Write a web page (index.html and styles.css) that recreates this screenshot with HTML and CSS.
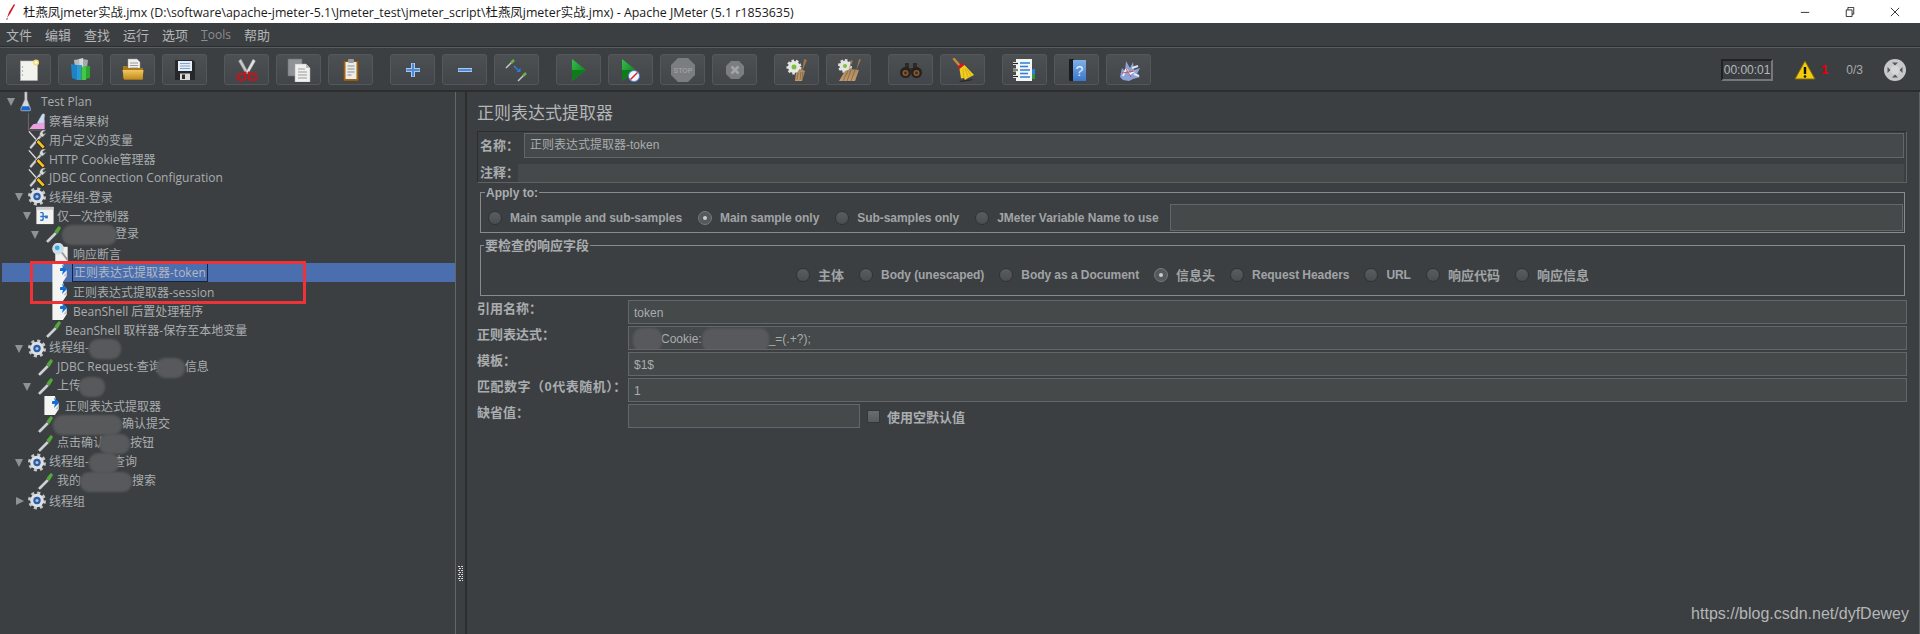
FILE: index.html
```html
<!DOCTYPE html>
<html lang="zh">
<head>
<meta charset="utf-8">
<title>JMeter</title>
<link rel="stylesheet" href="styles.css">
</head>
<body>
<svg class="defs" aria-hidden="true">
<defs>
<linearGradient id="gGreen" x1="0" y1="0" x2="1" y2="1"><stop offset="0" stop-color="#35c04a"/><stop offset="1" stop-color="#0a6f1a"/></linearGradient>
<linearGradient id="gFolder" x1="0" y1="0" x2="0" y2="1"><stop offset="0" stop-color="#f2c860"/><stop offset="1" stop-color="#c08a1c"/></linearGradient>
<linearGradient id="gBlue" x1="0" y1="0" x2="0" y2="1"><stop offset="0" stop-color="#7fb0e8"/><stop offset="1" stop-color="#3a78cc"/></linearGradient>
<linearGradient id="gBrush" x1="0" y1="0" x2="0" y2="1"><stop offset="0" stop-color="#a98a62"/><stop offset="1" stop-color="#c09a6c"/></linearGradient>

<symbol id="i-new" viewBox="0 0 24 24"><rect x="3.500" y="3" width="17" height="19.500" fill="#f2f2ee" stroke="#b8b8b4" stroke-width=".6"/><circle cx="5.500" cy="9" r=".7" fill="#999"/><circle cx="5.500" cy="13" r=".7" fill="#999"/><circle cx="5.500" cy="17" r=".7" fill="#999"/><circle cx="19" cy="4.500" r="3" fill="#f3dd7a"/><circle cx="19" cy="4.500" r="1.500" fill="#fff7c8"/></symbol>

<symbol id="i-tmpl" viewBox="0 0 24 24"><path d="M5 2l6-1 1 8-6 1z" fill="#b5babd"/><path d="M10 1l4-1 1 9-4 1z" fill="#d7dadc"/><path d="M14 1l5 1-1 8-4-1z" fill="#a4a9ac"/><path d="M2 6l6 1v15l-5-2z" fill="#1c83c9"/><path d="M8 7h5v15H8z" fill="#2a9ad6"/><path d="M12 9l9-1v12l-9 2z" fill="#2aa52e"/><path d="M13 9h4v13h-4z" fill="#48c648"/></symbol>

<symbol id="i-open" viewBox="0 0 24 24"><path d="M7 1h9l3 3v12H7z" fill="#efefec" stroke="#a0a0a0" stroke-width=".5"/><path d="M9 5h8M9 7.500h8M9 10h8" stroke="#9a9a9a"/><path d="M2 8h4l1.500 2H22v11.500H3.500L2 20z" fill="#a87a18"/><path d="M1.500 12h21l-1 9.500H3z" fill="url(#gFolder)"/></symbol>

<symbol id="i-save" viewBox="0 0 24 24"><path d="M2 2h18l2 2v18H2z" fill="#25282b"/><rect x="5" y="3" width="14" height="10" fill="#e7edf4"/><path d="M7 5.500h10M7 8h10M7 10.500h10" stroke="#7da6d4"/><rect x="7" y="15.500" width="10" height="6.500" fill="#d8d8d8"/><rect x="9" y="16.500" width="3" height="4.500" fill="#2b2b2b"/></symbol>

<symbol id="i-cut" viewBox="0 0 24 24"><path d="M6 1l7 13-2 2L3.500 3z" fill="#c6c9cb" stroke="#85888a" stroke-width=".5"/><path d="M18 1l-7 13 2 2 7.500-13z" fill="#e2e3e4" stroke="#85888a" stroke-width=".5"/><ellipse cx="6.500" cy="19" rx="4" ry="3.300" fill="none" stroke="#d01016" stroke-width="2"/><ellipse cx="17.500" cy="19" rx="4" ry="3.300" fill="none" stroke="#d01016" stroke-width="2"/><path d="M9 16l2-2M15 16l-2-2" stroke="#d01016" stroke-width="2"/></symbol>

<symbol id="i-copy" viewBox="0 0 24 24"><rect x="1" y="1" width="14" height="17" fill="#8f9396" stroke="#6d7073" stroke-width=".6"/><path d="M8 6h11l4 4v14H8z" fill="#f0f0ee" stroke="#b0b0ae" stroke-width=".5"/><path d="M19 6v4h4z" fill="#bbb"/><path d="M11 11h7M11 14h9M11 17h9M11 20h9" stroke="#9b9b9b"/></symbol>

<symbol id="i-paste" viewBox="0 0 24 24"><rect x="4.500" y="3" width="15" height="20" rx="1" fill="#9c6414" stroke="#6f470e" stroke-width=".6"/><rect x="6.500" y="4" width="11" height="17" fill="#ececea"/><rect x="9" y="1" width="6" height="4" rx="1" fill="#9a9c9e"/><path d="M8.500 8h7M8.500 11h7M8.500 14h7M8.500 17h4" stroke="#8f8f8f"/></symbol>

<symbol id="i-plus" viewBox="0 0 24 24"><path d="M12 5v14M5 12h14" stroke="#a9c8ee" stroke-width="4"/><path d="M12 5.500v13M5.500 12h13" stroke="#4e8ad6" stroke-width="2"/></symbol>
<symbol id="i-minus" viewBox="0 0 24 24"><path d="M5 12h14" stroke="#a9c8ee" stroke-width="4"/><path d="M5.500 12h13" stroke="#4e8ad6" stroke-width="2"/></symbol>

<symbol id="i-toggle" viewBox="0 0 24 24"><path d="M1 10l6-6" stroke="#c9ccce" stroke-width="1.500"/><path d="M6 5l3-3" stroke="#6fb04a" stroke-width="2.500"/><path d="M13 23l6-6" stroke="#c9ccce" stroke-width="1.500"/><path d="M18 18l3-3" stroke="#6fb04a" stroke-width="2.500"/><path d="M9 8l4 4" stroke="#2f7fe0" stroke-width="1.400"/><path d="M11.500 14l4 0 0-4z" fill="#2f7fe0"/></symbol>

<symbol id="i-run" viewBox="0 0 24 24"><path d="M5 1l14 11L5 23z" fill="url(#gGreen)"/><path d="M5 12h14L5 23z" fill="#0d7d1c"/></symbol>
<symbol id="i-runx" viewBox="0 0 24 24"><path d="M3 1l14 11L3 23z" fill="url(#gGreen)"/><path d="M3 12h14L3 23z" fill="#0d7d1c"/><circle cx="15" cy="18" r="5.500" fill="#f4f6fa" stroke="#4a7fd0"/><path d="M11.500 21.500l7-7" stroke="#d0202a" stroke-width="1.500"/></symbol>

<symbol id="i-stop" viewBox="0 0 24 24"><path d="M7 0h10l7 7v10l-7 7H7l-7-7V7z" fill="#7b7e80"/><text x="12" y="15" text-anchor="middle" class="stop-text">STOP</text></symbol>
<symbol id="i-shut" viewBox="0 0 24 24"><path d="M8 3h8l5 5v8l-5 5H8l-5-5V8z" fill="#7b7e80"/><path d="M8.500 8.500l7 7M15.500 8.500l-7 7" stroke="#a2a4a6" stroke-width="2.600"/></symbol>

<symbol id="i-gbroom" viewBox="0 0 24 24"><circle cx="9" cy="9" r="6" fill="none" stroke="#dfe0e0" stroke-width="3" stroke-dasharray="2.400 1.800"/><circle cx="9" cy="9" r="6" fill="#e8e8e6"/><circle cx="9" cy="9" r="2.500" fill="#7cc13a"/><path d="M19 1l3 1-5 12z" fill="#9b7448"/><path d="M11 15l5-4 4 2-3 10h-7z" fill="url(#gBrush)"/><path d="M13 15l-1 7M16 14l-1 8M18 14l-1 8" stroke="#7d5c36" stroke-width=".7"/></symbol>
<symbol id="i-gbroom2" viewBox="0 0 24 24"><circle cx="8" cy="8" r="5.500" fill="none" stroke="#dfe0e0" stroke-width="3" stroke-dasharray="2.400 1.800"/><circle cx="8" cy="8" r="5.500" fill="#e4e4e2"/><circle cx="8" cy="8" r="2" fill="#7cc13a"/><path d="M14 2l2 .8-4 9zM22 1l2 .8-5 11z" fill="#9b7448"/><path d="M2 23l6-10 5-2 9 1-4 11z" fill="url(#gBrush)"/><path d="M6 23l5-10M10 23l4-11M14 23l4-11" stroke="#7d5c36" stroke-width=".7"/></symbol>

<symbol id="i-bino" viewBox="0 0 24 24"><path d="M6 5h4v5H6zM14 5h4v5h-4z" fill="#2d2a27"/><rect x="9" y="10" width="6" height="4" fill="#33302d"/><circle cx="6.500" cy="14.500" r="5.500" fill="#26231f"/><circle cx="17.500" cy="14.500" r="5.500" fill="#26231f"/><circle cx="6.500" cy="15" r="3" fill="#8a5a32"/><circle cx="17.500" cy="15" r="3" fill="#8a5a32"/><circle cx="6.500" cy="15" r="1.400" fill="#42281a"/><circle cx="17.500" cy="15" r="1.400" fill="#42281a"/></symbol>

<symbol id="i-broom" viewBox="0 0 24 24"><path d="M8 23l14-2-2 1.500-10 1.500z" fill="#26282a"/><path d="M3 1l6 7" stroke="#c98a3a" stroke-width="2.500" stroke-linecap="round"/><path d="M6.500 8.500l5-4 2 2.500-5 4z" fill="#d8171c"/><path d="M8.500 11l5-4L23 17l-6 3-3 2-1-2-3 .5z" fill="#f0cd1f"/><path d="M12 11l1 9M14 10l3 9M16 11l4 7" stroke="#c9a612" stroke-width=".7"/></symbol>

<symbol id="i-log" viewBox="0 0 24 24"><rect x="3" y="1" width="16" height="22" fill="#f5f5f2"/><path d="M7 5h10M7 8.500h8M7 12h10M7 15.500h8M7 19h10" stroke="#2e7fdc" stroke-width="1.300"/><path d="M0 5.500h5M0 12h5M0 18.500h5" stroke="#e0e0e0" stroke-width="3"/><path d="M0 5.500h5M0 12h5M0 18.500h5" stroke="#222" stroke-width="1"/><rect x="19" y="11" width="3" height="5" fill="#2e7fdc"/><rect x="19" y="16" width="3" height="5" fill="#2b9a3a"/></symbol>

<symbol id="i-help" viewBox="0 0 24 24"><rect x="4" y="1" width="5" height="22" rx="1" fill="#1a1c1e"/><rect x="8" y="2" width="13" height="21" fill="url(#gBlue)"/><text x="14.500" y="18" text-anchor="middle" class="help-text">?</text></symbol>

<symbol id="i-func" viewBox="0 0 24 24"><path d="M3 19l2-9 3 3 1-10 4 7 3-6 1 8 6-2-3 6 3 3-7 2-4 2-6-1z" fill="#8aa2d6"/><path d="M6 18l3-7 4 5 5-3" stroke="#eef2fa" stroke-width="1.800" fill="none"/><path d="M8 9l6 10M5 15l13-2" stroke="#c63a4a" stroke-width=".8"/><path d="M15 10l6-2M17 16l5 2" stroke="#dfe6f4" stroke-width="2"/></symbol>

<symbol id="t-flask" viewBox="0 0 20 22"><path d="M5.500 1v8L1.500 18c-.8 2 0 3 1.500 3h7c1.500 0 2.300-1 1.500-3L8 9V1z" fill="#d5d8da" stroke="#8a8d90" stroke-width=".6"/><path d="M3 16h7l1.300 3c.3 1-.3 1.500-1.300 1.500H3c-1 0-1.600-.5-1.300-1.500z" fill="#1a66d0"/></symbol>
<symbol id="t-graph" viewBox="0 0 20 22"><path d="M1 3v18h18" fill="none" stroke="#6a6d70"/><path d="M2 20l4-5 5-1 2-2 5-2v10z" fill="#ee9fe0"/><path d="M10 14l5-9c1-2 4-1 3 1l-1 8z" fill="#c9dcf6" stroke="#9ab" stroke-width=".4"/></symbol>
<symbol id="t-tools" viewBox="0 0 20 22"><path d="M1.500 2.500l9 10" stroke="#dfe1e3" stroke-width="1.400"/><path d="M3 20L15 6" stroke="#6d7072" stroke-width="3.200"/><path d="M3 20L15 6" stroke="#d8dadc" stroke-width="1.800"/><path d="M10 12l7.500 8" stroke="#1e1e1e" stroke-width="4.400"/><path d="M10.500 12.500l6.500 7" stroke="#f6c21c" stroke-width="3"/><path d="M19 1.500a4.500 4.500 0 0 0-6 5.500l3 1.500 3.500-4-3 1-.5-2z" fill="#d8dadc" stroke="#6d7072" stroke-width=".5"/></symbol>
<symbol id="t-gear" viewBox="0 0 20 20"><circle cx="10" cy="10" r="7.500" fill="none" stroke="#c6c9cd" stroke-width="3" stroke-dasharray="3 2.890"/><circle cx="10" cy="10" r="6.800" fill="#dde0e3"/><circle cx="10" cy="10" r="3.700" fill="#2b5ca6"/><circle cx="10" cy="10" r="1.500" fill="#a6c6ee"/></symbol>
<symbol id="t-ctrl" viewBox="0 0 20 22"><rect x="1" y="2" width="18" height="18" fill="#f2f2f0"/><rect x="1" y="2" width="18" height="3" fill="#c9cbcd"/><path d="M5 8h3M5 12h5M5 16h3M8 8v8" stroke="#2f74c8" stroke-width="1.500" fill="none"/><rect x="10" y="11" width="3" height="3" fill="#2f74c8"/></symbol>
<symbol id="t-pipe" viewBox="0 0 20 22"><path d="M1.500 20.500l2-3.500 8.500-8.500 2 2-8.500 8.500z" fill="#cfd2d4" stroke="#6f7274" stroke-width=".4"/><path d="M11.500 7.500l4-5c1-1 3.500 1 2.500 2.500l-3.500 5.500z" fill="#55a83a"/><path d="M1 21l2-3 1 2z" fill="#1c1c1c"/></symbol>
<symbol id="t-regex" viewBox="0 0 20 22"><path d="M1 1h11l1 4 3 3v7l-4 6H1z" fill="#f4f4f2"/><path d="M12.500 15l3-4v4z" fill="#c4c4c2"/><path d="M11 2.500l5.500 5.500-5.500 5.500 1-4-3-.2V6.500l3-.5z" fill="#0f6fd6"/></symbol>
<symbol id="t-assert" viewBox="0 0 20 22"><path d="M4 4h13v18H4z" fill="#f0f0ee"/><circle cx="7" cy="6" r="5.500" fill="#bfe0ee" stroke="#d8dcdf" stroke-width="1.400"/><circle cx="6" cy="5" r="2.500" fill="#3fa6d8"/><path d="M11 10l6 8" stroke="#9a9c9e" stroke-width="2"/></symbol>
</defs>
</svg>

<header class="titlebar">
  <svg class="app-icon" viewBox="0 0 10 16"><path d="M9 0L4 8 2 14l3-4 5-9z" fill="#d01826"/><path d="M2 14l-1 2 2-1z" fill="#333"/></svg>
  <span class="title-text">杜燕凤jmeter实战.jmx (D:\software\apache-jmeter-5.1\Jmeter_test\jmeter_script\杜燕凤jmeter实战.jmx) - Apache JMeter (5.1 r1853635)</span>
  <div class="winctl">
    <svg viewBox="0 0 12 12"><path d="M1 6.500h10" stroke="#111"/></svg>
    <svg viewBox="0 0 12 12" fill="none"><path d="M1.500 3.500h7v8h-7zM3.500 3.500v-3h7v8h-2" stroke="#111"/></svg>
    <svg viewBox="0 0 12 12"><path d="M1 1l10 10M11 1L1 11" stroke="#111"/></svg>
  </div>
</header>

<nav class="menubar">
  <span>文件</span><span>编辑</span><span>查找</span><span>运行</span><span>选项</span><span class="dim"><u>T</u>ools</span><span>帮助</span>
</nav>

<div class="toolbar">
  <div class="tgroup">
    <button class="tbtn"><svg><use href="#i-new"/></svg></button>
    <button class="tbtn"><svg><use href="#i-tmpl"/></svg></button>
    <button class="tbtn"><svg><use href="#i-open"/></svg></button>
    <button class="tbtn"><svg><use href="#i-save"/></svg></button>
  </div>
  <div class="tgroup">
    <button class="tbtn"><svg><use href="#i-cut"/></svg></button>
    <button class="tbtn"><svg><use href="#i-copy"/></svg></button>
    <button class="tbtn"><svg><use href="#i-paste"/></svg></button>
  </div>
  <div class="tgroup">
    <button class="tbtn"><svg><use href="#i-plus"/></svg></button>
    <button class="tbtn"><svg><use href="#i-minus"/></svg></button>
    <button class="tbtn"><svg><use href="#i-toggle"/></svg></button>
  </div>
  <div class="tgroup">
    <button class="tbtn"><svg><use href="#i-run"/></svg></button>
    <button class="tbtn"><svg><use href="#i-runx"/></svg></button>
    <button class="tbtn"><svg><use href="#i-stop"/></svg></button>
    <button class="tbtn"><svg><use href="#i-shut"/></svg></button>
  </div>
  <div class="tgroup">
    <button class="tbtn"><svg><use href="#i-gbroom"/></svg></button>
    <button class="tbtn"><svg><use href="#i-gbroom2"/></svg></button>
  </div>
  <div class="tgroup">
    <button class="tbtn"><svg><use href="#i-bino"/></svg></button>
    <button class="tbtn"><svg><use href="#i-broom"/></svg></button>
  </div>
  <div class="tgroup">
    <button class="tbtn"><svg><use href="#i-log"/></svg></button>
    <button class="tbtn"><svg><use href="#i-help"/></svg></button>
    <button class="tbtn"><svg><use href="#i-func"/></svg></button>
  </div>
  <div class="status">
    <span class="timer">00:00:01</span>
    <svg class="warn" viewBox="0 0 22 20"><path d="M11 1l10 18H1z" fill="#f2cc0c" stroke="#7d6a12"/><path d="M11 7v7" stroke="#111" stroke-width="2.400"/><circle cx="11" cy="16.500" r="1.300" fill="#111"/></svg>
    <span class="errcount">1</span>
    <span class="threads">0/3</span>
    <svg class="globe" viewBox="0 0 22 22"><circle cx="11" cy="11" r="11" fill="#c6c8c9"/><circle cx="11" cy="11" r="4.500" fill="#d6d7d8"/><path d="M8 3.500h6l-3 3zM8 18.500h6l-3-3zM3.500 8v6l3-3zM18.500 8v6l-3-3z" fill="#55585a"/></svg>
  </div>
</div>

<main class="split">
  <section class="tree">
    <div class="row l0"><i class="tw down"></i><svg class="ico"><use href="#t-flask"/></svg><span class="lbl">Test Plan</span></div>
    <div class="row l1"><i class="tw"></i><svg class="ico"><use href="#t-graph"/></svg><span class="lbl">察看结果树</span></div>
    <div class="row l1"><i class="tw"></i><svg class="ico"><use href="#t-tools"/></svg><span class="lbl">用户定义的变量</span></div>
    <div class="row l1"><i class="tw"></i><svg class="ico"><use href="#t-tools"/></svg><span class="lbl">HTTP Cookie管理器</span></div>
    <div class="row l1"><i class="tw"></i><svg class="ico"><use href="#t-tools"/></svg><span class="lbl">JDBC Connection Configuration</span></div>
    <div class="row l1"><i class="tw down"></i><svg class="ico"><use href="#t-gear"/></svg><span class="lbl">线程组-登录</span></div>
    <div class="row l2"><i class="tw down"></i><svg class="ico"><use href="#t-ctrl"/></svg><span class="lbl">仅一次控制器</span></div>
    <div class="row l3"><i class="tw down"></i><svg class="ico"><use href="#t-pipe"/></svg><span class="lbl"><b class="blur b55"></b>登录</span></div>
    <div class="row l4"><i class="tw"></i><svg class="ico"><use href="#t-assert"/></svg><span class="lbl">响应断言</span></div>
    <div class="row l4 selected"><i class="tw"></i><svg class="ico"><use href="#t-regex"/></svg><span class="lbl">正则表达式提取器-token</span></div>
    <div class="row l4"><i class="tw"></i><svg class="ico"><use href="#t-regex"/></svg><span class="lbl">正则表达式提取器-session</span></div>
    <div class="row l4"><i class="tw"></i><svg class="ico"><use href="#t-regex"/></svg><span class="lbl">BeanShell 后置处理程序</span></div>
    <div class="row l3"><i class="tw"></i><svg class="ico"><use href="#t-pipe"/></svg><span class="lbl">BeanShell 取样器-保存至本地变量</span></div>
    <div class="row l1"><i class="tw down"></i><svg class="ico"><use href="#t-gear"/></svg><span class="lbl">线程组-<b class="blur b32"></b></span></div>
    <div class="row l2"><i class="tw"></i><svg class="ico"><use href="#t-pipe"/></svg><span class="lbl">JDBC Request-查询<b class="blur b29"></b>信息</span></div>
    <div class="row l2"><i class="tw down"></i><svg class="ico"><use href="#t-pipe"/></svg><span class="lbl">上传<b class="blur b26"></b></span></div>
    <div class="row l3"><i class="tw"></i><svg class="ico"><use href="#t-regex"/></svg><span class="lbl">正则表达式提取器</span></div>
    <div class="row l2"><i class="tw"></i><svg class="ico"><use href="#t-pipe"/></svg><span class="lbl"><b class="blur b69"></b>确认提交</span></div>
    <div class="row l2"><i class="tw"></i><svg class="ico"><use href="#t-pipe"/></svg><span class="lbl">点击确认<b class="blur b31"></b>按钮</span></div>
    <div class="row l1"><i class="tw down"></i><svg class="ico"><use href="#t-gear"/></svg><span class="lbl">线程组-<b class="blur b30"></b>查询</span></div>
    <div class="row l2"><i class="tw"></i><svg class="ico"><use href="#t-pipe"/></svg><span class="lbl">我的<b class="blur b52"></b>搜索</span></div>
    <div class="row l1"><i class="tw right"></i><svg class="ico"><use href="#t-gear"/></svg><span class="lbl">线程组</span></div>
    <div class="redbox"></div>
  </section>

  <div class="divider">
    <svg class="grip" viewBox="0 0 5 15"><path d="M0 0h2v1H0zM3 0h2v1H3zM1 2h2v1H1zM4 2h1v1H4zM0 4h2v1H0zM3 4h2v1H3zM1 6h2v1H1zM4 6h1v1H4zM0 8h2v1H0zM3 8h2v1H3zM1 10h2v1H1zM4 10h1v1H4zM0 12h2v1H0zM3 12h2v1H3zM1 14h2v1H1zM4 14h1v1H4z" fill="#d8d8d8"/></svg>
  </div>

  <section class="editor">
    <h1 class="heading">正则表达式提取器</h1>
    <div class="namebox">
      <div class="namerow"><label class="lab">名称：</label><div class="input field-name">正则表达式提取器-token</div></div>
      <div class="namerow comment"><label class="lab">注释：</label><div class="input plain"></div></div>
    </div>

    <div class="group g-apply">
      <span class="legend">Apply to:</span>
      <label class="opt"><i class="radio"></i>Main sample and sub-samples</label>
      <label class="opt"><i class="radio on"></i>Main sample only</label>
      <label class="opt"><i class="radio"></i>Sub-samples only</label>
      <label class="opt"><i class="radio"></i>JMeter Variable Name to use</label>
      <div class="input var"></div>
    </div>

    <div class="group g-field">
      <span class="legend legend-cn">要检查的响应字段</span>
      <label class="opt cjk"><i class="radio"></i>主体</label>
      <label class="opt"><i class="radio"></i>Body (unescaped)</label>
      <label class="opt"><i class="radio"></i>Body as a Document</label>
      <label class="opt cjk"><i class="radio on"></i>信息头</label>
      <label class="opt"><i class="radio"></i>Request Headers</label>
      <label class="opt"><i class="radio"></i>URL</label>
      <label class="opt cjk"><i class="radio"></i>响应代码</label>
      <label class="opt cjk"><i class="radio"></i>响应信息</label>
    </div>

    <div class="fields">
      <label class="lab">引用名称：</label><div class="input">token</div>
      <label class="lab">正则表达式：</label><div class="input"><b class="blur f29"></b>Cookie:<b class="blur f67"></b>_=(.+?);</div>
      <label class="lab">模板：</label><div class="input">$1$</div>
      <label class="lab wide">匹配数字（0代表随机）：</label><div class="input">1</div>
      <label class="lab">缺省值：</label>
      <div class="lastrow"><div class="input short"></div><i class="check"></i><span class="checktext">使用空默认值</span></div>
    </div>
  </section>
  <span class="watermark">https://blog.csdn.net/dyfDewey</span>
</main>
</body>
</html>
```

FILE: styles.css
```css
* { box-sizing: border-box; }
html, body { margin: 0; padding: 0; }
body {
  width: 1920px;
  height: 634px;
  overflow: hidden;
  background: #3c3f41;
  color: #bbbbbb;
  font-family: "Liberation Sans", "Noto Sans CJK SC", sans-serif;
  font-size: 12px;
}
.defs { position: absolute; width: 0; height: 0; }
.stop-text { font: bold 7px "Liberation Sans", sans-serif; fill: #9b9da0; }
.help-text { font: 14px "Liberation Sans", sans-serif; fill: #eaf2fc; }

/* title bar */
.titlebar {
  height: 23px;
  background: #fff;
  display: flex;
  align-items: center;
  padding-left: 5px;
  color: #1a1a1a;
  font-family: "Open Sans", "Noto Sans CJK SC", sans-serif;
  font-size: 12.4px;
}
.app-icon { width: 10px; height: 16px; margin-right: 8px; }
.winctl { margin-left: auto; display: flex; gap: 35px; padding-right: 20px; }
.winctl svg { width: 10px; height: 10px; }

/* menu */
.menubar {
  height: 25px;
  display: flex;
  align-items: center;
  gap: 13px;
  padding: 0 0 2px 6px;
  font-size: 13px;
  color: #b4b6b8;
  border-bottom: 1px solid #5a5d5f;
  box-shadow: inset 0 -1px 0 #2b2d2e;
}
.menubar .dim { color: #8b8e90; font-family: "Open Sans", sans-serif; font-size: 12px; }

/* toolbar */
.toolbar {
  height: 44px;
  display: flex;
  gap: 17px;
  padding: 6px 0 0 6px;
  border-bottom: 2px solid #2b2d2e;
}
.tgroup { display: flex; gap: 7px; }
.tbtn {
  width: 45px;
  height: 31px;
  padding: 0;
  display: flex;
  align-items: center;
  justify-content: center;
  border: 1px solid #55585a;
  border-radius: 3px;
  background: linear-gradient(#4c5052, #42464a);
}
.tbtn svg { width: 24px; height: 24px; }
.status {
  margin-left: auto;
  display: flex;
  align-items: center;
  height: 31px;
  padding-right: 14px;
}
.timer {
  width: 52px;
  height: 22px;
  display: flex;
  align-items: center;
  justify-content: center;
  border: 2px solid;
  border-color: #222 #75787a #75787a #222;
  background: #3a3d3f;
  font-size: 12px;
  color: #b4b8bc;
}
.warn { width: 22px; height: 20px; margin-left: 21px; }
.errcount { margin-left: 5px; color: #e4000f; font-weight: bold; font-size: 13px; }
.threads { margin-left: 18px; color: #a8acb0; }
.globe { width: 22px; height: 22px; margin-left: 21px; }

/* split */
.split {
  position: relative;
  height: 542px;
  display: grid;
  grid-template-columns: 456px 9px 1fr;
}
.tree {
  position: relative;
  padding-left: 2px;
  border-right: 1px solid #646769;
}
.row {
  height: 19px;
  display: flex;
  align-items: center;
  color: #a9adb0;
  font-family: "Open Sans", "Noto Sans CJK SC", sans-serif;
  font-size: 12px;
  white-space: nowrap;
}
.row.selected { background: #4b6eaf; }
.row.selected .lbl {
  margin-left: 1px;
  padding: 0 1px;
  height: 19px;
  line-height: 18px;
  border: 1px solid #14233f;
  color: #b4bac2;
}
.l0 { padding-left: 5px; }
.l1 { padding-left: 13px; }
.l2 { padding-left: 21px; }
.l3 { padding-left: 29px; }
.l4 { padding-left: 37px; }
.tw { width: 12px; height: 10px; flex: none; position: relative; }
.tw.down::before, .tw.right::before {
  content: "";
  position: absolute;
  left: 0;
  top: 1px;
  border-style: solid;
  border-color: transparent;
}
.tw.down::before { border-width: 8px 4.500px 0; border-top-color: #8f9294; }
.tw.right::before { left: 1px; border-width: 4.500px 0 4.500px 8px; border-left-color: #8f9294; }
.ico { width: 20px; height: 21px; flex: none; }
.lbl { margin-left: 2px; }
.blur {
  display: inline-block;
  height: 20px;
  vertical-align: middle;
  background: #57595b;
  border-radius: 9px;
  filter: blur(.8px);
}
.b55 { width: 55px; margin-left: -3px; margin-right: -2px; }
.b32 { width: 32px; }
.b29 { width: 29px; margin-left: -5px; }
.b26 { width: 26px; margin-left: -2px; }
.b69 { width: 69px; margin-left: -4px; }
.b31 { width: 31px; margin-left: -6px; }
.b30 { width: 30px; margin-right: -6px; }
.b52 { width: 52px; margin-left: -1px; }
.redbox {
  position: absolute;
  left: 30px;
  top: 169px;
  width: 276px;
  height: 43px;
  border: 3px solid #ee3338;
}

.divider {
  display: flex;
  justify-content: center;
  align-items: flex-end;
  padding-bottom: 53px;
}
.grip { width: 5px; height: 15px; }

/* editor */
.editor {
  padding: 11px 12px 0 10px;
  border-left: 2px solid #2b2d2e;
  border-right: 1px solid #5f6264;
}
.heading {
  margin: 0;
  height: 21px;
  line-height: 21px;
  font-size: 17px;
  font-weight: normal;
  color: #b4b6b8;
}
.input {
  height: 24px;
  line-height: 22px;
  padding: 0 5px;
  background: #45494a;
  border: 1px solid #646769;
  color: #a9adb0;
  font-size: 12px;
  overflow: hidden;
  white-space: nowrap;
}
.lab { font-size: 13px; font-weight: bold; color: #a9adb0; white-space: nowrap; }
.namebox {
  margin-top: 7px;
  height: 52px;
  padding: 1px 2px 0 2px;
  border: 1px solid #2b2d2e;
  border-right-color: #5f6264;
  border-bottom-color: #5f6264;
}
.namerow { display: flex; align-items: center; }
.namerow .lab { width: 44px; flex: none; position: relative; top: -1px; }
.field-name { flex: 1; height: 25px; }
.comment { margin-top: 5px; }
.namerow.comment .lab { width: 38px; }
.plain { flex: 1; height: 18px; border: 0; }

.group {
  position: relative;
  margin: 9px 2px 0 3px;
  border: 1px solid #888b8d;
  display: flex;
}
.legend {
  position: absolute;
  left: 4px;
  top: -8px;
  padding: 0 1px;
  line-height: 16px;
  background: #3c3f41;
  font-size: 12px;
  font-weight: bold;
  color: #a9adb0;
}
.legend-cn { left: 3px; font-size: 13px; }
.opt {
  display: flex;
  align-items: center;
  gap: 8px;
  font-weight: bold;
  letter-spacing: -.05px;
  color: #a0a4a7;
  white-space: nowrap;
}
.opt.cjk { font-size: 13px; letter-spacing: 0; }
.radio {
  width: 14px;
  height: 14px;
  border-radius: 50%;
  background: linear-gradient(#595d60, #4a4e50);
  border: 1px solid #303335;
  position: relative;
  flex: none;
}
.radio.on { background: #55595c; border-color: #777a7c; }
.radio.on::after {
  content: "";
  position: absolute;
  left: 4px;
  top: 4px;
  width: 4px;
  height: 4px;
  border-radius: 50%;
  background: #c9cbcd;
}
.g-apply { height: 41px; align-items: center; gap: 16px; padding: 10px 1px 0 7px; }
.g-apply .input { height: 27px; flex: 1; margin-left: -5px; }
.g-field { margin-top: 12px; height: 51px; align-items: center; justify-content: center; gap: 15px; padding-top: 8px; }

.fields {
  margin-top: 4px;
  display: grid;
  grid-template-columns: 151px 1fr;
  row-gap: 2px;
}
.fields .lab { line-height: 18px; }
.fields .wide { letter-spacing: .5px; }
.fields .input { line-height: 24px; }
.f29 { width: 29px; margin-left: -1px; margin-right: -1px; height: 24px; }
.f67 { width: 67px; height: 24px; }
.lastrow { display: flex; align-items: center; }
.short { width: 232px; }
.check {
  width: 13px;
  height: 13px;
  margin-left: 7px;
  background: linear-gradient(#6a6d6f, #585b5d);
  border: 1px solid #34373a;
}
.checktext { margin-left: 7px; font-size: 13px; font-weight: bold; color: #a9adb0; }

.watermark {
  position: absolute;
  right: 11px;
  top: 513px;
  font-size: 16px;
  color: #b4b6b8;
}
```
